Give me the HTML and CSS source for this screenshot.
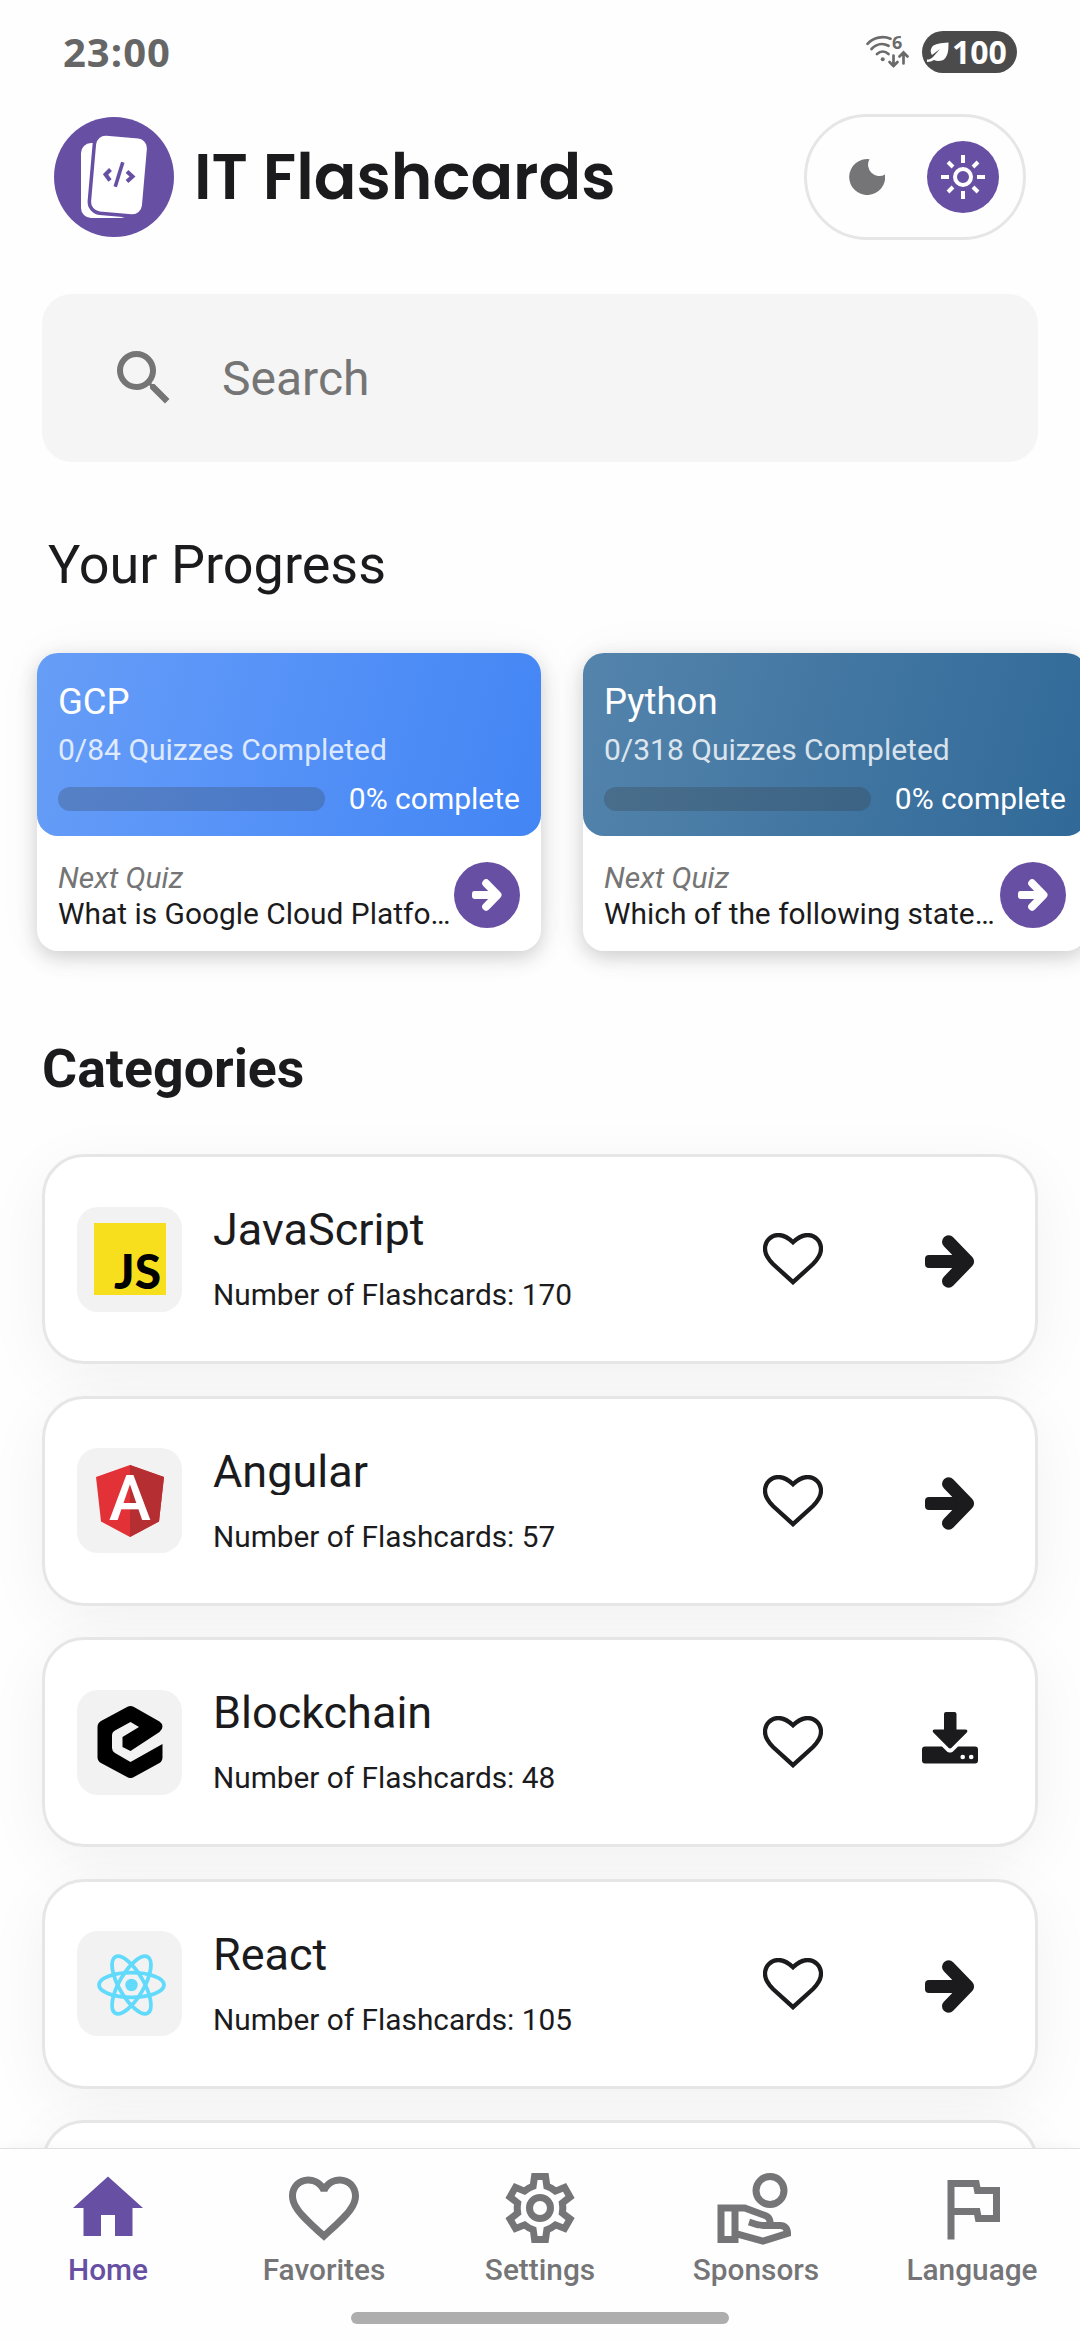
FILE: index.html
```html
<!DOCTYPE html>
<html lang="en">

<head>
    <meta charset="UTF-8">
    <meta name="viewport" content="width=device-width, initial-scale=1.0">
    <title>IT Flashcards</title>
    <link rel="stylesheet" href="styles.css">
</head>

<body>

    <!-- Shared icons -->
    <svg class="sprite" xmlns="http://www.w3.org/2000/svg">
        <symbol id="arrow" viewBox="0 0 50 53">
            <rect x="0" y="20" width="36" height="13" rx="4" fill="currentColor" />
            <path d="M23.5 6.8L42.6 26.5 23.5 46.2" fill="none" stroke="currentColor" stroke-width="13"
                stroke-linecap="round" stroke-linejoin="round" />
        </symbol>
        <symbol id="heart" viewBox="0 0 60 52">
            <path d="M30 9.2C25 4.5 20.500 2 15.500 2 8 2 2 8 2 16c0 6 3 10 8 15l20 18.200L50 31c5-5 8-9 8-15 0-8-6-14-13.500-14C39.500 2 35 4.500 30 9.200z"
                fill="none" stroke="currentColor" stroke-width="4.300" />
        </symbol>
        <symbol id="download" viewBox="0 0 56 52">
            <path d="M24 0h8.500a2 2 0 0 1 2 2v15.500h9c1.800 0 2.500 1.800 1.300 3L29.500 35.800c-.8.8-2.200.8-3 0L11.300 20.500c-1.200-1.200-.5-3 1.300-3H22V2a2 2 0 0 1 2-2z"
                fill="currentColor" />
            <path d="M3 34.500h17l4.500 4.500c2 2 5 2 7 0l4.500-4.500h17a3 3 0 0 1 3 3v11a3 3 0 0 1-3 3H3a3 3 0 0 1-3-3v-11a3 3 0 0 1 3-3z"
                fill="currentColor" />
            <circle cx="40.700" cy="45" r="2.300" fill="#fff" />
            <circle cx="49.200" cy="45" r="2.300" fill="#fff" />
        </symbol>
    </svg>

    <main class="screen">

        <!-- Status bar -->
        <div class="status-bar">
            <span class="time">23:00</span>
            <div class="status-icons">
                <svg class="wifi" viewBox="0 0 43 33" fill="none" stroke="currentColor" stroke-width="2.700"
                    stroke-linecap="round">
                    <path d="M1.500 8.800C7.500 2.300 17 .5 24.500 3.700M5.500 14C10.500 8.700 17 7.800 22.500 10.800M11 19c3.500-3.200 8-3.200 11.500 0" />
                    <circle cx="16.700" cy="24.300" r="2" fill="currentColor" stroke="none" />
                    <path d="M27.500 20.500V31M23.500 27l4 4 4-4M37.500 28.500V18M33.500 21.500l4-4 4 4" />
                    <text class="wifi-gen" x="26" y="14">6</text>
                </svg>
                <div class="battery">
                    <svg class="leaf" viewBox="0 0 22 21">
                        <path d="M21.500.5C14 1 7.500 1.500 5 5c-2 3-1.500 6 0 8l8-6-7 8c-2 2-4 2.500-6 2.500v2.500c3 0 5-.7 7-2 3 1.500 8 1.500 11-1.500C21.500 12 21.500 7 21.500.5z"
                            fill="#fff" />
                    </svg>
                    <span>100</span>
                </div>
            </div>
        </div>

        <!-- Header -->
        <header class="header">
            <svg class="logo" viewBox="0 0 120 120">
                <circle cx="60" cy="60" r="60" fill="#674fa3" />
                <rect x="27" y="26" width="50" height="75" rx="10" fill="#fff" />
                <g transform="rotate(5 65 58)">
                    <rect x="36" y="16.500" width="58" height="83" rx="13" fill="#674fa3" />
                    <rect x="39.500" y="20" width="51" height="76" rx="9.500" fill="#fff" />
                </g>
                <path d="M56.500 52.500l-5 5 4.500 6M73 54.500l5.500 5-5.500 5" fill="none" stroke="#674fa3" stroke-width="4" />
                <path d="M68.800 45.200L61.200 69.800" stroke="#674fa3" stroke-width="3.600" />
            </svg>
            <h1>IT Flashcards</h1>
            <div class="theme-toggle">
                <span class="theme-option">
                    <svg class="moon" viewBox="0 0 36 36">
                        <path d="M20.500.2A18 18 0 1 0 36 15.500 11.300 11.300 0 0 1 20.500.2z" fill="currentColor" />
                    </svg>
                </span>
                <span class="theme-option active">
                    <svg class="sun" viewBox="-22 -22 44 44" fill="none" stroke="currentColor" stroke-width="4">
                        <circle r="8" />
                        <path d="M0-22v8M0 14v8M-22 0h8M14 0h8M-15-15l5 5M10 10l5 5M-15 15l5-5M10-10l5-5" />
                    </svg>
                </span>
            </div>
        </header>

        <!-- Search -->
        <div class="search">
            <svg viewBox="0 0 24 24">
                <path d="M15.500 14h-.79l-.28-.27A6.470 6.470 0 0 0 16 9.500 6.500 6.500 0 1 0 9.500 16c1.610 0 3.090-.59 4.230-1.570l.27.28v.79l5 4.990L20.490 19l-4.990-5zm-6 0C7.010 14 5 11.990 5 9.500S7.010 5 9.500 5 14 7.010 14 9.500 11.990 14 9.500 14z"
                    fill="currentColor" />
            </svg>
            <span>Search</span>
        </div>

        <!-- Progress -->
        <h2 class="progress-title">Your Progress</h2>
        <div class="progress-list">
            <article class="progress-card">
                <div class="progress-top gcp">
                    <h3>GCP</h3>
                    <p class="completed">0/84 Quizzes Completed</p>
                    <div class="progress-row">
                        <div class="bar"></div>
                        <span>0% complete</span>
                    </div>
                </div>
                <div class="next">
                    <div class="next-text">
                        <p class="next-label">Next Quiz</p>
                        <p class="next-name">What is Google Cloud Platfo…</p>
                    </div>
                    <span class="next-button"><svg><use href="#arrow" /></svg></span>
                </div>
            </article>
            <article class="progress-card">
                <div class="progress-top python">
                    <h3>Python</h3>
                    <p class="completed">0/318 Quizzes Completed</p>
                    <div class="progress-row">
                        <div class="bar"></div>
                        <span>0% complete</span>
                    </div>
                </div>
                <div class="next">
                    <div class="next-text">
                        <p class="next-label">Next Quiz</p>
                        <p class="next-name">Which of the following state…</p>
                    </div>
                    <span class="next-button"><svg><use href="#arrow" /></svg></span>
                </div>
            </article>
        </div>

        <!-- Categories -->
        <h2 class="categories-title">Categories</h2>
        <div class="categories">
            <article class="category">
                <div class="tile">
                    <svg viewBox="0 0 72 72">
                        <rect width="72" height="72" fill="#f7df1e" />
                        <text class="js-text" x="20" y="66" textLength="47" lengthAdjust="spacingAndGlyphs">JS</text>
                    </svg>
                </div>
                <div class="info">
                    <h3>JavaScript</h3>
                    <p>Number of Flashcards: 170</p>
                </div>
                <svg class="heart"><use href="#heart" /></svg>
                <svg class="go"><use href="#arrow" /></svg>
            </article>
            <article class="category">
                <div class="tile">
                    <svg viewBox="0 0 72 72">
                        <path d="M36 0L2 12l5 44.500L36 72l29-15.500L70 12z" fill="#e23237" />
                        <path d="M36 0v72l29-15.500L70 12z" fill="#b52e31" />
                        <text class="angular-text" x="36" y="55" text-anchor="middle">A</text>
                    </svg>
                </div>
                <div class="info">
                    <h3>Angular</h3>
                    <p>Number of Flashcards: 57</p>
                </div>
                <svg class="heart"><use href="#heart" /></svg>
                <svg class="go"><use href="#arrow" /></svg>
            </article>
            <article class="category">
                <div class="tile">
                    <svg viewBox="0 0 72 72">
                        <path d="M33.500.8q3-1.600 6 0L65.500 15.500q3 2 3 5t-3 5.500L36.500 45l-8-4V31L45 21l-8.500-5L21 24.500q-3 1.500-3 5V42q0 3 3 5l15.500 9 32-18v13q0 4-3 6L39.500 71.300q-3 1.500-6 0L7 57q-3.500-2-3.500-6V21q0-4 3.500-6z" />
                    </svg>
                </div>
                <div class="info">
                    <h3>Blockchain</h3>
                    <p>Number of Flashcards: 48</p>
                </div>
                <svg class="heart"><use href="#heart" /></svg>
                <svg class="download"><use href="#download" /></svg>
            </article>
            <article class="category">
                <div class="tile">
                    <svg viewBox="-37.500 -37 72 72" fill="none" stroke="#61dafb" stroke-width="3.800">
                        <ellipse rx="32.500" ry="12.300" />
                        <ellipse rx="32.500" ry="12.300" transform="rotate(60)" />
                        <ellipse rx="32.500" ry="12.300" transform="rotate(120)" />
                        <circle r="6.200" fill="#61dafb" stroke="none" />
                    </svg>
                </div>
                <div class="info">
                    <h3>React</h3>
                    <p>Number of Flashcards: 105</p>
                </div>
                <svg class="heart"><use href="#heart" /></svg>
                <svg class="go"><use href="#arrow" /></svg>
            </article>
            <article class="category"></article>
        </div>

    </main>

    <!-- Bottom navigation -->
    <nav class="bottom-nav">
        <div class="tabs">
            <a class="tab active">
                <svg viewBox="0 0 24 24"><path d="M10 20v-6h4v6h5v-8h3L12 3 2 12h3v8z" /></svg>
                <span>Home</span>
            </a>
            <a class="tab">
                <svg viewBox="0 0 24 24">
                    <path d="M16.500 3c-1.740 0-3.410.81-4.500 2.090C10.910 3.810 9.240 3 7.500 3 4.420 3 2 5.420 2 8.500c0 3.780 3.400 6.860 8.550 11.540L12 21.350l1.450-1.320C18.600 15.360 22 12.280 22 8.500 22 5.420 19.580 3 16.500 3zm-4.400 15.550l-.1.100-.1-.1C7.140 14.240 4 11.390 4 8.500 4 6.500 5.500 5 7.500 5c1.540 0 3.040.99 3.570 2.360h1.870C13.460 5.990 14.960 5 16.500 5c2 0 3.500 1.500 3.500 3.500 0 2.890-3.140 5.740-7.900 10.050z" />
                </svg>
                <span>Favorites</span>
            </a>
            <a class="tab">
                <svg viewBox="0 0 24 24" fill-rule="evenodd">
                    <path d="M19.440 13c.04-.33.08-.67.08-1s-.03-.66-.07-.99l2.440-1.900-2.430-4.220-2.870 1.160c-.52-.4-1.090-.74-1.710-1L14.440 2H9.570l-.44 3.050c-.62.26-1.190.6-1.710 1L4.560 4.890 2.120 9.110l2.440 1.900c-.04.33-.07.66-.07.99s.03.68.08 1l-2.430 1.900 2.430 4.200 2.880-1.150c.53.41 1.100.75 1.730 1.010L9.580 22h4.850l.44-3.050c.62-.26 1.200-.6 1.730-1.010l2.880 1.150 2.430-4.200zM17.450 11.270c.04.31.05.52.05.73s-.02.43-.05.73l-.14 1.130 1.970 1.540-.7 1.210-2.310-.93-.9.680c-.43.32-.84.56-1.250.73l-1.060.43-.36 2.480h-1.400l-.35-2.480-1.060-.43c-.43-.18-.83-.41-1.230-.71l-.91-.7-2.330.94-.7-1.210 1.970-1.540-.14-1.130c-.03-.31-.05-.54-.05-.74s.02-.43.05-.73l.14-1.130-1.970-1.540.7-1.210 2.310.93.900-.68c.43-.32.84-.56 1.250-.73l1.060-.43.36-2.480h1.390l.35 2.480 1.060.43c.43.18.83.41 1.230.71l.91.7 2.330-.94.7 1.210-1.960 1.550zM12 8a4 4 0 1 0 0 8 4 4 0 0 0 0-8zm0 2a2 2 0 1 1 0 4 2 2 0 0 1 0-4z" />
                </svg>
                <span>Settings</span>
            </a>
            <a class="tab">
                <svg viewBox="0 0 24 24" fill-rule="evenodd">
                    <path d="M1 11h7.970l6.160 2.300c1.120.42 1.870 1.500 1.870 2.700h2c1.660 0 3 1.340 3 3v1l-8 2.500-7-1.940V22H1zM3 13v7h2v-7zM7 13v5.500l6.970 1.920 5.930-1.860c-.16-.34-.5-.56-.9-.56h-4.800c-.9 0-1.600-.1-2.300-.33l-2.200-.72.6-1.900 2.200.75c.6.200 1.300.2 2.500.2 0-.38-.23-.72-.58-.85L8.600 13z" />
                    <path d="M16 2a5 5 0 1 0 0 10 5 5 0 0 0 0-10zm0 2a3 3 0 1 1 0 6 3 3 0 0 1 0-6z" />
                </svg>
                <span>Sponsors</span>
            </a>
            <a class="tab">
                <svg viewBox="0 0 24 24">
                    <path d="M12.360 6l.4 2H18v6h-3.360l-.4-2H7V6h5.360M14 4H5v17h2v-7h5.600l.4 2h7V6h-5.600z" />
                </svg>
                <span>Language</span>
            </a>
        </div>
        <div class="home-indicator"></div>
    </nav>

</body>

</html>
```

FILE: styles.css
```css
* {
    box-sizing: border-box;
    margin: 0;
    padding: 0;
}

body {
    width: 1080px;
    height: 2340px;
    display: flex;
    flex-direction: column;
    overflow: hidden;
    background: #fefefe;
    color: #1b1b1d;
    font-family: Roboto, sans-serif;
}

h1,
h2,
h3 {
    font-weight: 400;
}

svg {
    flex: none;
    display: block;
}

.sprite {
    position: absolute;
    width: 0;
    height: 0;
}

.screen {
    flex: 1;
    min-height: 0;
    overflow: hidden;
    isolation: isolate;
}

/* Status bar */
.status-bar {
    height: 114px;
    padding: 31px 63px 0 63px;
    display: flex;
    justify-content: space-between;
    align-items: flex-start;
    font-family: "Open Sans", "Noto Sans", sans-serif;
}

.time {
    font-size: 40px;
    line-height: 42px;
    font-weight: 700;
    letter-spacing: 1px;
    color: #666;
}

.status-icons {
    display: flex;
    gap: 13px;
}

.wifi {
    width: 43px;
    height: 33px;
    margin-top: 4px;
    overflow: visible;
    color: #6b6b6b;
}

.wifi-gen {
    font-size: 18px;
    font-weight: 700;
    fill: currentColor;
    stroke: none;
}

.battery {
    width: 95px;
    height: 42px;
    padding-left: 5px;
    border-radius: 21px;
    background: #4b4b4b;
    color: #fff;
    display: flex;
    align-items: center;
    gap: 3px;
    font-size: 32px;
    font-weight: 700;
    line-height: 42px;
}

.leaf {
    width: 22px;
    height: 21px;
}

/* Header */
.header {
    height: 126px;
    padding: 0 54px;
    display: flex;
    align-items: center;
}

.logo {
    width: 120px;
    height: 120px;
}

.header h1 {
    flex: 1;
    margin-left: 20px;
    font-family: Poppins, Inter, sans-serif;
    font-size: 63px;
    font-weight: 600;
    line-height: 72px;
    font-feature-settings: "cv11";
    white-space: nowrap;
}

.theme-toggle {
    width: 222px;
    height: 126px;
    border: 3px solid #e6e6e6;
    border-radius: 63px;
    display: flex;
    justify-content: space-between;
    align-items: center;
    padding: 0 24px;
    color: #757577;
}

.theme-option {
    width: 72px;
    height: 72px;
    border-radius: 50%;
    display: flex;
    align-items: center;
    justify-content: center;
}

.theme-option.active {
    background: #674fa3;
    color: #fff;
}

.moon {
    width: 36px;
    height: 36px;
}

.sun {
    width: 44px;
    height: 44px;
}

/* Search */
.search {
    height: 168px;
    margin: 54px 42px 0;
    padding-left: 66px;
    border-radius: 30px;
    background: #f5f5f5;
    color: #757575;
    display: flex;
    align-items: center;
    gap: 42px;
    font-size: 48px;
}

.search svg {
    width: 72px;
    height: 72px;
}

/* Progress */
.progress-title {
    margin: 71px 0 0 48px;
    font-size: 54px;
    line-height: 64px;
}

.progress-list {
    display: flex;
    gap: 42px;
    padding-left: 37px;
    margin-top: 56px;
}

.progress-card {
    flex: none;
    width: 504px;
    height: 298px;
    border-radius: 21px;
    background: #fff;
    box-shadow: 0 6px 20px rgba(0, 0, 0, 0.18), 0 0 50px rgba(0, 0, 0, 0.04);
}

.progress-top {
    height: 183px;
    padding: 28px 21px 0;
    border-radius: 21px;
    color: #fff;
}

.gcp {
    background: linear-gradient(105deg, #669df6, #5a95f8 35%, #4285f4);
}

.python {
    background: linear-gradient(105deg, #5484ac, #306998);
}

.progress-top h3 {
    font-size: 36.5px;
    line-height: 42px;
}

.completed {
    margin-top: 9px;
    font-size: 30px;
    line-height: 36px;
    opacity: 0.8;
}

.progress-row {
    margin-top: 13px;
    display: flex;
    justify-content: space-between;
    align-items: center;
    font-size: 30px;
    line-height: 36px;
}

.bar {
    width: 267px;
    height: 24px;
    border-radius: 12px;
    background: rgba(50, 50, 50, 0.25);
}

.next {
    height: 117px;
    padding: 1px 21px 0;
    display: flex;
    align-items: center;
    justify-content: space-between;
}

.next-text {
    width: 395px;
    font-size: 30px;
    line-height: 36px;
    padding-top: 2px;
    white-space: nowrap;
}

.next-label {
    font-style: italic;
    color: #757575;
}

.next-name {
    font-size: 29.9px;
}

.next-button {
    flex: none;
    width: 66px;
    height: 66px;
    border-radius: 50%;
    background: #674fa3;
    color: #fff;
    display: flex;
    align-items: center;
    justify-content: center;
}

.next-button svg {
    width: 30px;
    height: 32px;
}

/* Categories */
.categories-title {
    margin: 86px 0 0 42px;
    font-size: 53.7px;
    font-weight: 700;
    line-height: 64px;
}

.categories {
    margin: 53px 42px 0;
    display: flex;
    flex-direction: column;
    gap: 31.5px;
}

.category {
    position: relative;
    flex: none;
    height: 210px;
    border: 3px solid #e6e6e6;
    border-radius: 42px;
    background: #fff;
    display: flex;
    align-items: center;
    padding: 0 56px 0 32px;
}

/* keeps the shadows below the neighbouring cards */
.category::before {
    content: "";
    position: absolute;
    inset: 0;
    z-index: -1;
    border-radius: 42px;
    box-shadow: 0 14px 66px rgba(0, 0, 0, 0.06);
}

.tile {
    width: 105px;
    height: 105px;
    border-radius: 21px;
    background: #f2f2f2;
    display: flex;
    align-items: center;
    justify-content: center;
}

.tile svg {
    width: 72px;
    height: 72px;
}

.js-text {
    font-family: Lato, sans-serif;
    font-size: 47px;
    font-weight: 900;
}

.angular-text {
    font-size: 63px;
    font-weight: 500;
    fill: #fff;
}

.info {
    flex: 1;
    margin-left: 31px;
    padding-top: 1px;
}

.info h3 {
    height: 47px;
    overflow: hidden;
    font-size: 45px;
    line-height: 47px;
}

.info p {
    margin-top: 24px;
    font-size: 29.8px;
    line-height: 36px;
}

.heart {
    width: 60px;
    height: 52px;
    margin-right: 102px;
}

.go {
    width: 50px;
    height: 53px;
    margin: 5px 4px 0 0;
}

.download {
    width: 56px;
    height: 52px;
    margin: 0 1px 8px -3px;
}

/* Bottom navigation */
.bottom-nav {
    position: relative;
    flex: none;
    height: 192px;
    border-top: 1px solid #e0e0e0;
    background: #fefefe;
    box-shadow: 0 -2px 10px rgba(0, 0, 0, 0.03);
}

.tabs {
    display: flex;
    height: 163px;
    padding-top: 17px;
}

.tab {
    flex: 1;
    display: flex;
    flex-direction: column;
    align-items: center;
    color: #757577;
    font-size: 29.8px;
    font-weight: 500;
    line-height: 36px;
}

.tab svg {
    width: 84px;
    height: 84px;
    margin-bottom: 2px;
    fill: currentColor;
}

.tab.active {
    color: #674fa3;
}

.home-indicator {
    width: 378px;
    height: 12px;
    margin: 0 auto;
    border-radius: 6px;
    background: #aeaeae;
}
```
